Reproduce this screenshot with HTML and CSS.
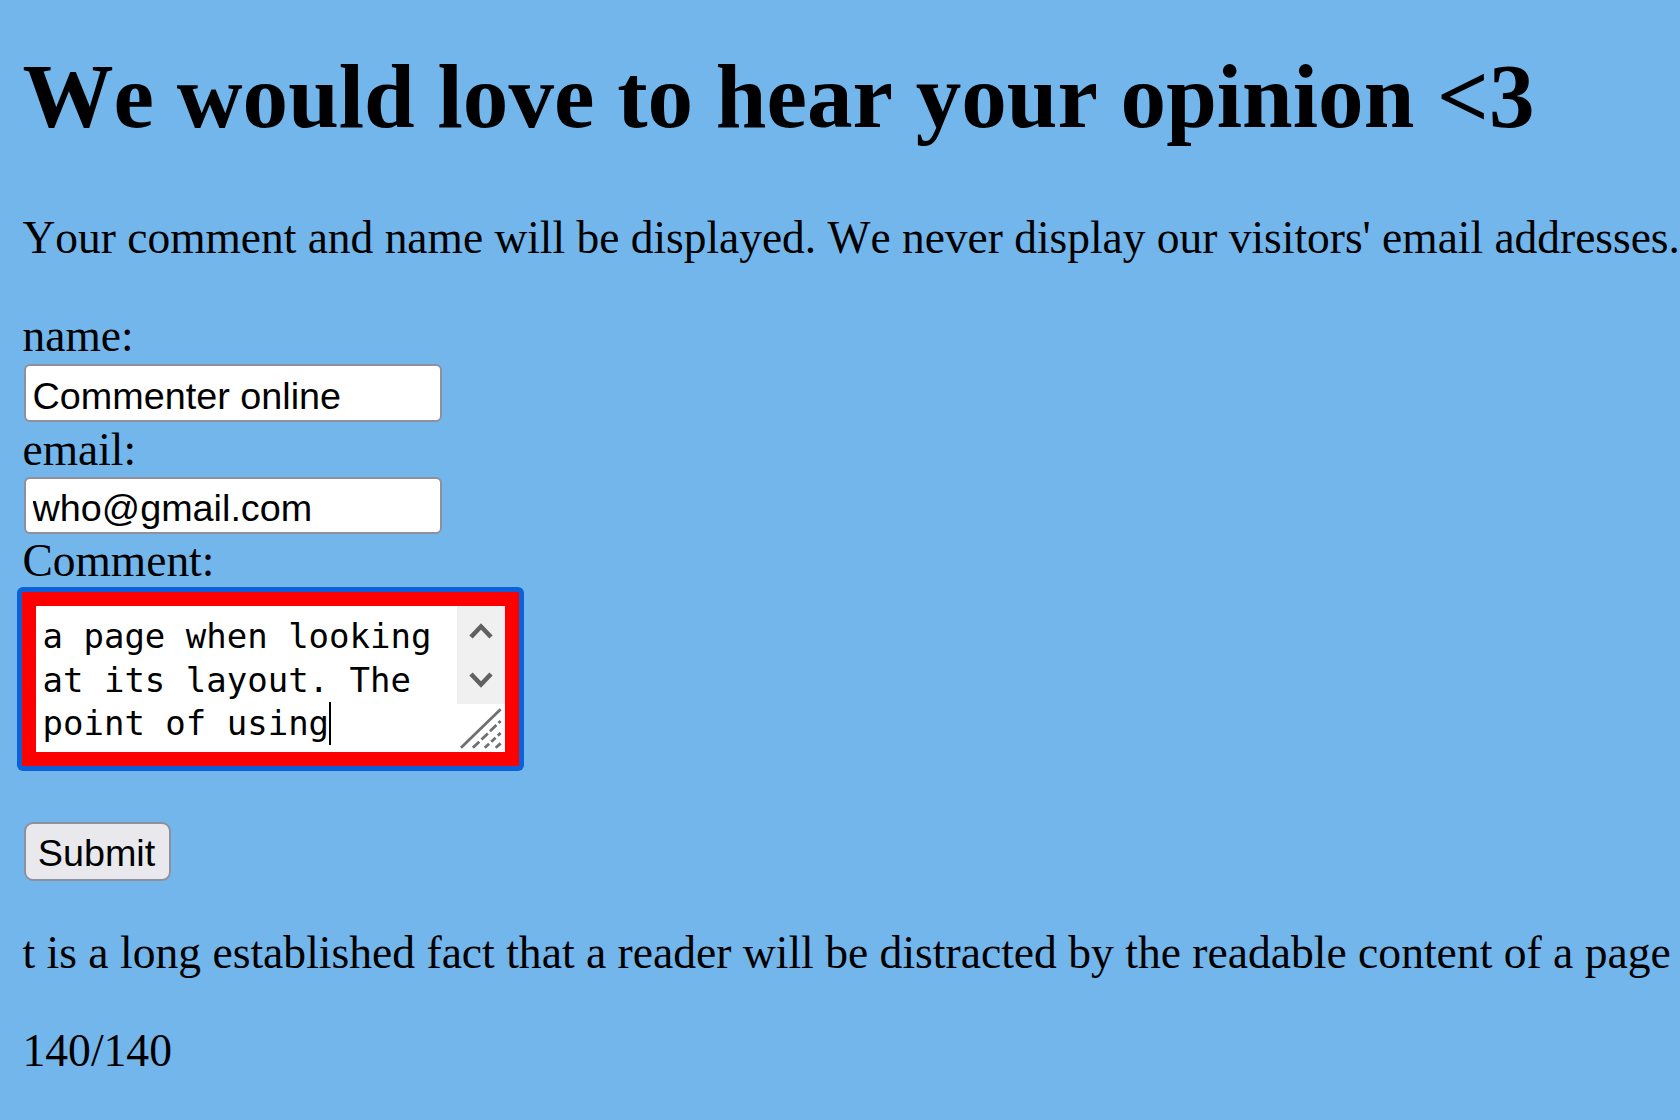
FILE: index.html
```html
<!DOCTYPE html>
<html lang="en">
<head>
<meta charset="utf-8">
<title>Comments</title>
<link rel="stylesheet" href="styles.css">
</head>
<body>
<h1 class="title">We would love to hear your opinion &lt;3</h1>
<p class="intro">Your comment and name will be displayed. We never display our visitors' email addresses.</p>
<form class="form">
  <label class="label label-name" for="name">name:</label>
  <input class="field field-name" id="name" type="text" value="Commenter online">
  <label class="label label-email" for="email">email:</label>
  <input class="field field-email" id="email" type="text" value="who@gmail.com">
  <label class="label label-comment">Comment:</label>
  <div class="focus-ring">
    <div class="comment-box">
      <div class="comment-text">a page when looking<br>at its layout. The<br>point of using<span class="caret"></span></div>
      <div class="scrollbar">
        <div class="scroll-btn">
          <svg class="chev" viewBox="0 0 24 16" width="24" height="16"><polyline points="2,14 12,3.5 22,14" fill="none" stroke="#616161" stroke-width="4.6"/></svg>
        </div>
        <div class="scroll-btn">
          <svg class="chev" viewBox="0 0 24 16" width="24" height="16"><polyline points="2,2 12,12.5 22,2" fill="none" stroke="#616161" stroke-width="4.6"/></svg>
        </div>
        <div class="resizer">
          <svg viewBox="0 0 48 48" width="48" height="48">
            <line x1="4" y1="44" x2="44" y2="5" stroke="#707070" stroke-width="2.8"/>
            <line x1="16" y1="44" x2="44" y2="17" stroke="#707070" stroke-width="2.8" stroke-dasharray="9 3"/>
            <line x1="28" y1="44" x2="44" y2="29" stroke="#707070" stroke-width="2.8" stroke-dasharray="6 3"/>
            <line x1="39" y1="44" x2="44" y2="39.5" stroke="#707070" stroke-width="2.8"/>
          </svg>
        </div>
      </div>
    </div>
  </div>
  <button class="submit" type="button">Submit</button>
</form>
<p class="result">t is a long established fact that a reader will be distracted by the readable content of a page</p>
<p class="count">140/140</p>
</body>
</html>
```

FILE: styles.css
```css
html {
  margin: 0;
  height: 100%;
  overflow: hidden;
  background: #72b6eb;
}

body {
  margin: 0;
  padding: 0 0 0 22.5px;
  font-family: "Liberation Serif", "Times New Roman", serif;
  font-kerning: none;
  color: #000;
  background: #72b6eb;
}

.title {
  margin: 0;
  padding-top: 45.4px;
  font-size: 91.1px;
  line-height: 104px;
  font-weight: bold;
  white-space: nowrap;
}

.intro {
  margin: 62.3px 0 0;
  font-size: 45.45px;
  line-height: 52px;
  white-space: nowrap;
}

.form {
  display: flex;
  flex-direction: column;
  align-items: flex-start;
  margin-top: 46.7px;
}

.label {
  display: block;
  font-size: 45.45px;
  line-height: 52px;
}

.label-email {
  margin-top: 1.7px;
}

.label-comment {
  margin-top: 1.1px;
}

.field {
  box-sizing: border-box;
  width: 418.3px;
  height: 57.6px;
  margin: 2px 0 0 1.5px;
  padding: 5.8px 4.6px 0 6.6px;
  border: 2.8px solid #8f8f9d;
  border-radius: 6px;
  background: #fff;
  font-family: "Liberation Sans", Arial, sans-serif;
  font-size: 37.75px;
  color: #000;
  outline: none;
}

.field-email {
  margin-top: 1px;
}

.focus-ring {
  margin: 0 0 0 -5.5px;
  padding: 5px;
  border-radius: 6px;
  background: #0b61d8;
}

.comment-box {
  display: flex;
  width: 469px;
  height: 146px;
  border: 14px solid #ff0000;
  background: #fff;
}

.comment-text {
  flex: 1;
  padding: 9px 0 0 6.5px;
  font-family: "DejaVu Sans Mono", "Liberation Mono", monospace;
  font-size: 34px;
  line-height: 43.5px;
  white-space: nowrap;
  overflow: hidden;
}

.caret {
  display: inline-block;
  width: 0;
  height: 42.3px;
  border-left: 2px solid #000;
  vertical-align: -9px;
}

.scrollbar {
  display: flex;
  flex-direction: column;
  width: 47.6px;
}

.scroll-btn {
  display: flex;
  align-items: center;
  justify-content: center;
  height: 48.8px;
  background: #f0f0f0;
}

.chev {
  display: block;
}

.resizer {
  flex: 1;
  display: flex;
  align-items: flex-end;
  justify-content: flex-end;
  background: #fff;
}

.resizer svg {
  display: block;
}

.submit {
  box-sizing: border-box;
  width: 147px;
  height: 59px;
  margin: 50.3px 0 0 1.5px;
  padding: 5px 2px 0 0;
  border: 2.8px solid #8f8f9d;
  border-radius: 9px;
  background: #e9e9ed;
  font-family: "Liberation Sans", Arial, sans-serif;
  font-size: 37.75px;
  color: #000;
  text-align: center;
}

.result {
  margin: 46.3px 0 0;
  font-size: 45.6px;
  line-height: 52px;
  white-space: nowrap;
}

.count {
  margin: 46.4px 0 0;
  font-size: 45.6px;
  line-height: 52px;
}
```
